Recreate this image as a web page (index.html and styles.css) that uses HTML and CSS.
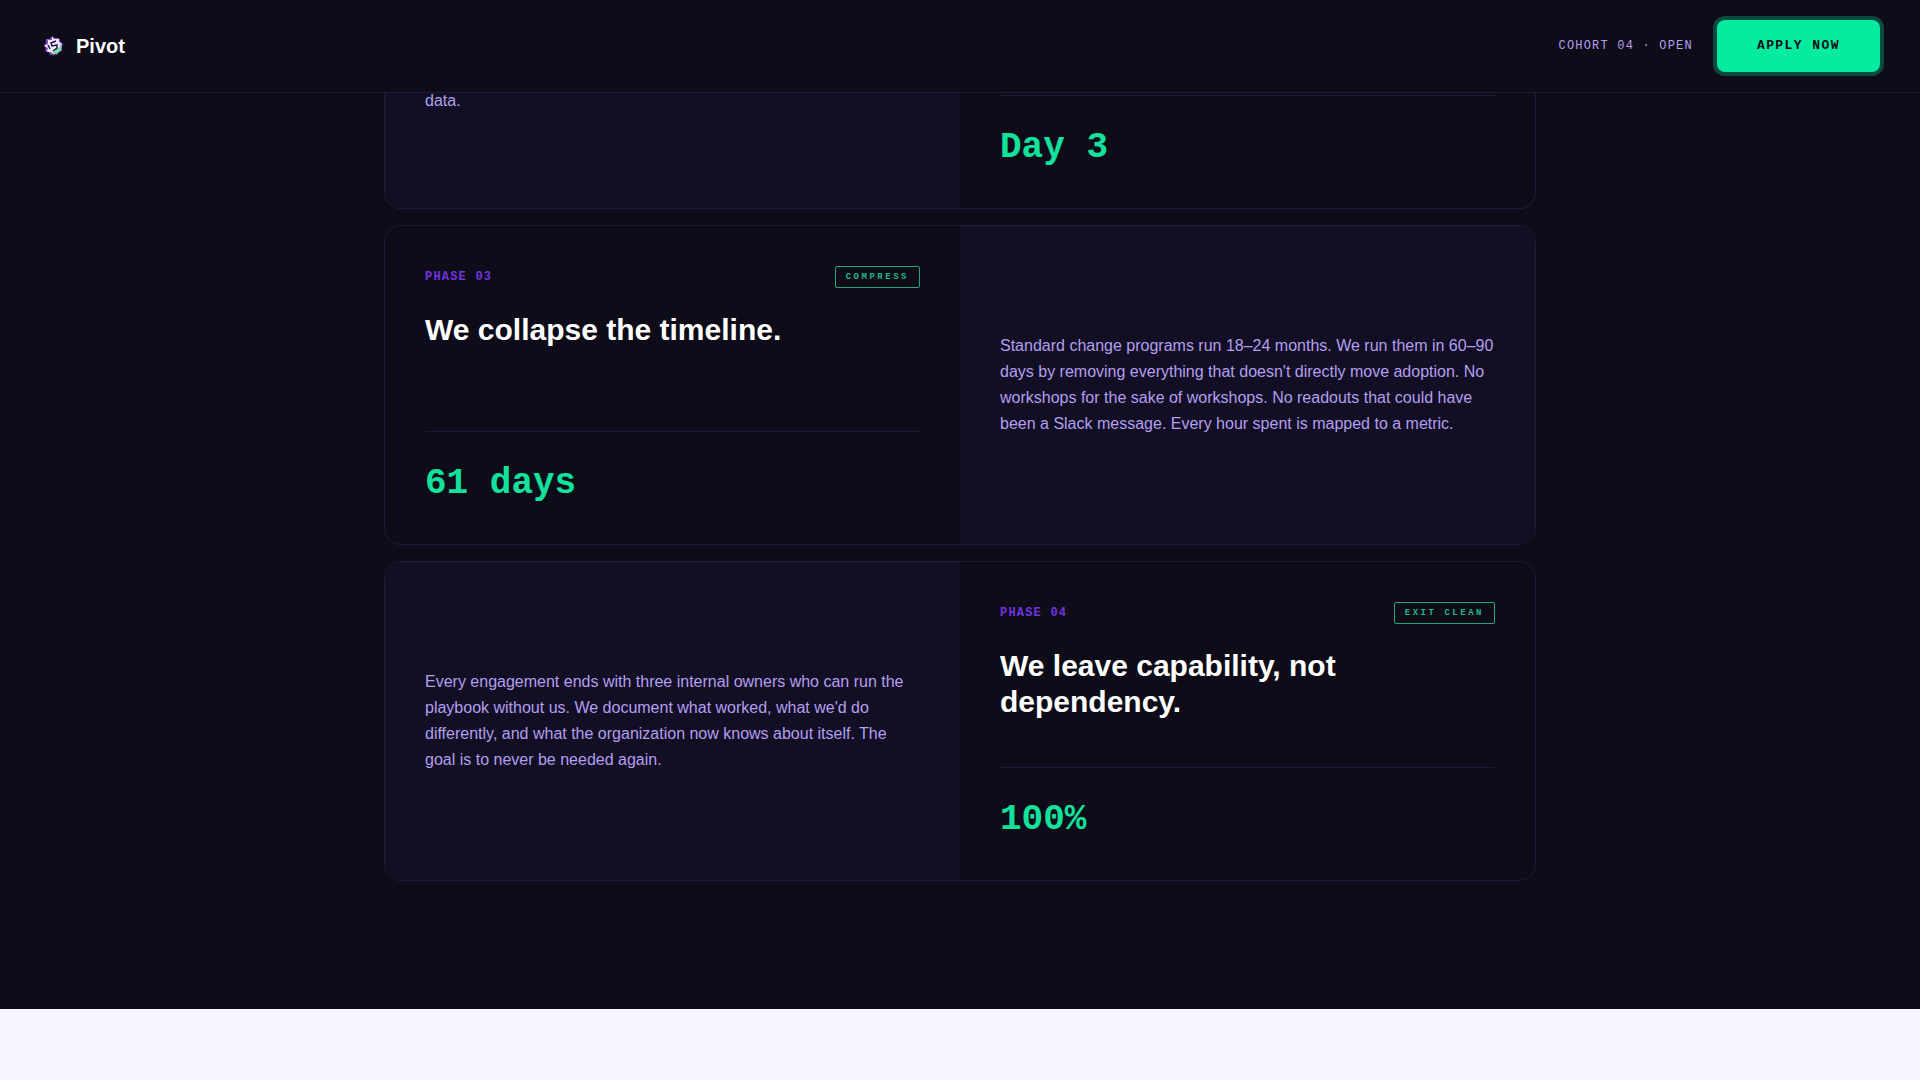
FILE: index.html
```html
<!DOCTYPE html>
<html lang="en">
<head>
<meta charset="utf-8">
<meta name="viewport" content="width=device-width, initial-scale=1">
<title>Pivot</title>
<link rel="stylesheet" href="styles.css">
</head>
<body>
<header class="topbar">
  <a class="brand" href="#">
    <svg class="brand-mark" viewBox="0 0 20 20" aria-hidden="true">
      <path d="M7 1l4 1 4 0 1 3 3 3-1 3 0 4-3 1-2 3-3-1-4 1-1-3-4-1 1-3-2-3 2-2 0-4 4 0z" fill="#8a4bd0"/>
      <path d="M8 0l2 3 5 0 0 3 3 2-2 2 0 5-4 0-2 4-3-3-4 0 1-4-4-2 4-2 0-4 4 0z" fill="#f1eaff"/>
      <path d="M18 9l-1 5-3 3-4 1-2-2 4-2z" fill="#6fe39c"/>
      <path d="M12 5L7 7l1 3 5-1 0 3-4 3M4 9l2 4" fill="none" stroke="#23174a" stroke-width="1.5"/>
    </svg>
    <span>Pivot</span>
  </a>
  <div class="topbar-actions">
    <span class="cohort">COHORT 04 · OPEN</span>
    <button class="apply" type="button">APPLY NOW</button>
  </div>
</header>
<main>
  <section class="phases">
    <article class="card card-first">
      <div class="panel panel-copy"><p>data.</p></div>
      <div class="panel panel-phase"><p class="metric">Day 3</p></div>
    </article>
    <article class="card">
      <div class="panel panel-phase">
        <div class="phase-head"><span class="phase-label">PHASE 03</span><span class="tag">COMPRESS</span></div>
        <h2>We collapse the timeline.</h2>
        <p class="metric">61 days</p>
      </div>
      <div class="panel panel-copy"><p>Standard change programs run 18–24 months. We run them in 60–90 days by removing everything that doesn't directly move adoption. No workshops for the sake of workshops. No readouts that could have been a Slack message. Every hour spent is mapped to a metric.</p></div>
    </article>
    <article class="card">
      <div class="panel panel-copy"><p>Every engagement ends with three internal owners who can run the playbook without us. We document what worked, what we'd do differently, and what the organization now knows about itself. The goal is to never be needed again.</p></div>
      <div class="panel panel-phase">
        <div class="phase-head"><span class="phase-label">PHASE 04</span><span class="tag">EXIT CLEAN</span></div>
        <h2>We leave capability, not dependency.</h2>
        <p class="metric">100%</p>
      </div>
    </article>
  </section>
  <section class="next"></section>
</main>
</body>
</html>
```
FILE: styles.css
```css
:root {
  --ink: #0e0c18;
  --panel: #120e24;
  --line: #1e1a38;
  --mint: #05eca0;
  --lavender: #b39ff0;
  --sans: "Liberation Sans", Arial, sans-serif;
  --mono: "Liberation Mono", "Courier New", monospace;
}

* { box-sizing: border-box; }

body {
  margin: 0;
  min-height: 100vh;
  background: var(--ink);
  color: #fff;
  font-family: var(--sans);
}

main {
  display: flex;
  flex-direction: column;
  min-height: 100vh;
}

h2, p { margin: 0; }

.topbar {
  position: fixed;
  top: 0;
  left: 0;
  right: 0;
  z-index: 10;
  display: flex;
  align-items: center;
  justify-content: space-between;
  padding: 20px 40px;
  background: var(--ink);
  border-bottom: 1px solid var(--line);
}

.brand {
  display: flex;
  align-items: center;
  gap: 8px;
  color: #fff;
  font-size: 20px;
  font-weight: 700;
  text-decoration: none;
}

.brand-mark { width: 28px; height: 28px; padding: 4px; }

.topbar-actions {
  display: flex;
  align-items: center;
  gap: 24px;
}

.cohort {
  color: var(--lavender);
  font: 12px/16px var(--mono);
  letter-spacing: 0.1em;
}

.apply {
  height: 52px;
  padding: 0 40px;
  border: 0;
  border-radius: 8px;
  background: var(--mint);
  box-shadow: 0 0 0 4px rgba(5, 236, 160, 0.28);
  color: var(--ink);
  font: 700 13px/16px var(--mono);
  letter-spacing: 0.11em;
}

.phases {
  display: flex;
  flex-direction: column;
  gap: 16px;
  width: 100%;
  max-width: 1152px;
  margin: 0 auto;
  padding-bottom: 128px;
}

.card {
  display: grid;
  grid-template-columns: 1fr 1fr;
  min-height: 320px;
  border: 1px solid var(--line);
  border-radius: 16px;
  overflow: hidden;
}

.card-first {
  min-height: 209px;
  border-top: 0;
  border-radius: 0 0 16px 16px;
}

.panel {
  display: flex;
  flex-direction: column;
  padding: 40px;
}

.panel-copy {
  justify-content: center;
  background: var(--panel);
  color: var(--lavender);
  font-size: 16px;
  line-height: 26px;
}

.card-first .panel-copy {
  justify-content: flex-end;
  padding-bottom: 94px;
}

.phase-head {
  display: flex;
  align-items: center;
  justify-content: space-between;
  margin-bottom: 24px;
}

.phase-label {
  color: #7233e0;
  font: 700 12px/20px var(--mono);
  letter-spacing: 0.1em;
}

.tag {
  padding: 4px 10px;
  border: 1px solid #23a583;
  border-radius: 2px;
  color: #1fb98a;
  font: 700 9px/12px var(--mono);
  letter-spacing: 0.28em;
}

h2 {
  font-size: 30px;
  line-height: 36px;
}

.metric {
  margin-top: auto;
  padding-top: 32px;
  border-top: 1px solid var(--line);
  color: #14e19c;
  font: 700 36px/40px var(--mono);
}

.next {
  flex: 1;
  min-height: 71px;
  background: #f8f7ff;
}
```
